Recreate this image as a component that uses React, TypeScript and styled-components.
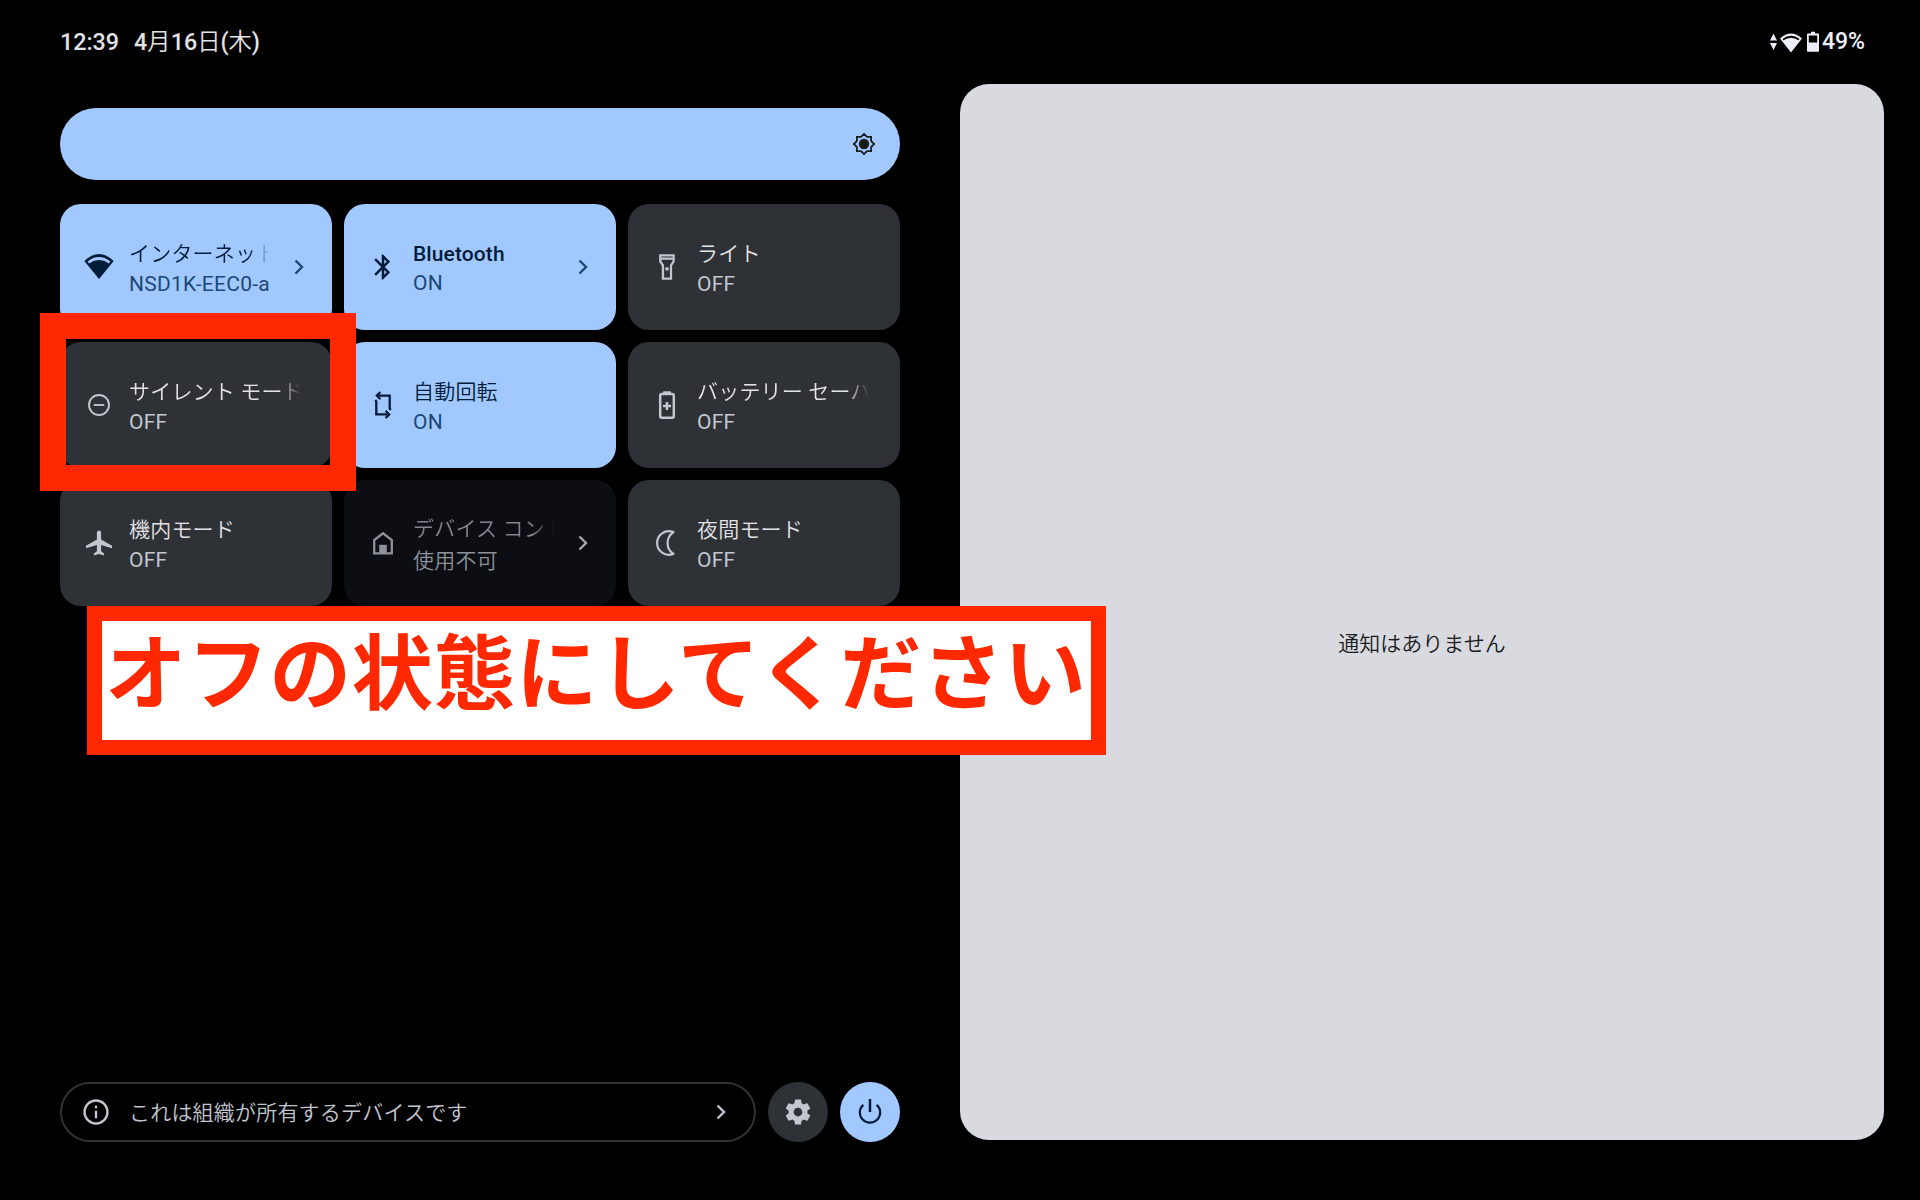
import React from "react";
import styled, { createGlobalStyle, css } from "styled-components";

const GlobalStyle = createGlobalStyle`
  * { box-sizing: border-box; }
  html, body { margin: 0; padding: 0; background: #000; }
  body { overflow: hidden; }
`;

type Tone = "on" | "off" | "unavailable";

const tones: Record<Tone, { bg: string; label: string; sub: string; icon: string; chevron: string }> = {
  on: { bg: "#a1c9ff", label: "#001c38", sub: "#1c4875", icon: "#001c38", chevron: "#1c4875" },
  off: { bg: "#2e3135", label: "#e3e2e6", sub: "#c3c6cf", icon: "#c3c6cf", chevron: "#c3c6cf" },
  unavailable: { bg: "#0c0e13", label: "#83868e", sub: "#8d9199", icon: "#8d9199", chevron: "#a4a8b0" },
};

const Screen = styled.div`
  position: relative;
  width: 1920px;
  height: 1200px;
  display: flex;
  flex-direction: column;
  background: #000;
  overflow: hidden;
  font-family: Roboto, "Noto Sans CJK JP", sans-serif;
`;

const StatusBar = styled.header`
  height: 84px;
  padding: 0 55px 0 60px;
  display: flex;
  justify-content: space-between;
  align-items: center;
  color: #e3e2e6;
  font-size: 23.3px;
  font-weight: 500;
  line-height: 28px;
  white-space: nowrap;
`;

const ClockGroup = styled.div`
  display: flex;
  align-items: baseline;
  gap: 15px;
`;

const Kanji = styled.span`
  font-weight: 350;
`;

const StatusIcons = styled.div`
  display: flex;
  align-items: center;
  color: #eeeef8;
  font-size: 23px;

  svg { display: block; flex: none; }
`;

const Percent = styled.span`
  margin-left: 3px;
`;

const Content = styled.main`
  display: flex;
  gap: 60px;
  padding-left: 60px;
  height: 1060px;
`;

const QuickSettings = styled.section`
  width: 840px;
  padding-top: 24px;
  display: flex;
  flex-direction: column;
  height: 1058px;
`;

const Brightness = styled.div`
  height: 72px;
  border-radius: 36px;
  background: #a1c9ff;
  display: flex;
  align-items: center;
  justify-content: flex-end;
  padding-right: 24px;
  color: #1a1c1e;
`;

const TileGrid = styled.div`
  margin-top: 24px;
  display: grid;
  grid-template-columns: repeat(3, 272px);
  grid-auto-rows: 126px;
  gap: 12px;
`;

const TileBox = styled.div<{ $tone: Tone; $chevron: boolean }>`
  display: flex;
  align-items: center;
  padding: 0 ${(p) => (p.$chevron ? 18 : 31)}px 0 24px;
  border-radius: 21px;
  background: ${(p) => tones[p.$tone].bg};
`;

const TileIcon = styled.span<{ $tone: Tone }>`
  width: 30px;
  height: 30px;
  flex: none;
  color: ${(p) => tones[p.$tone].icon};
  svg { display: block; }
`;

const TileText = styled.div`
  flex: 1;
  min-width: 0;
  margin-left: 15px;
  padding-top: 3px;
  font-size: 21px;
  white-space: nowrap;
`;

const TileLabel = styled.div<{ $tone: Tone; $latin?: boolean; $fade?: boolean }>`
  overflow: hidden;
  color: ${(p) => tones[p.$tone].label};
  font-weight: ${(p) => (p.$latin ? 500 : 350)};
  line-height: ${(p) => (p.$latin ? 25 : 28)}px;
  letter-spacing: ${(p) => (p.$latin ? 0.1 : 0.2)}px;
  ${(p) =>
    p.$fade &&
    css`
      mask-image: linear-gradient(to right, #000 calc(100% - 22px), transparent);
    `}
`;

const TileSub = styled.div<{ $tone: Tone; $cjk?: boolean }>`
  overflow: hidden;
  margin-top: 4px;
  color: ${(p) => tones[p.$tone].sub};
  font-weight: ${(p) => (p.$cjk ? 350 : 400)};
  line-height: ${(p) => (p.$cjk ? 28 : 25)}px;
  letter-spacing: 0.25px;
`;

const TileChevron = styled.span<{ $tone: Tone }>`
  width: 30px;
  height: 30px;
  flex: none;
  margin-left: 14px;
  color: ${(p) => tones[p.$tone].chevron};
  svg { display: block; }
`;

const Footer = styled.footer`
  margin-top: auto;
  display: flex;
  gap: 12px;
  height: 60px;
`;

const DevicePill = styled.div`
  flex: 1;
  display: flex;
  align-items: center;
  border: 2px solid #2e3135;
  border-radius: 30px;
  padding: 0 18px 0 19px;
  color: #c3c6cf;
  font-size: 21px;
  font-weight: 350;
  line-height: 30px;
  letter-spacing: 0.2px;
  white-space: nowrap;
  svg { display: block; flex: none; }
`;

const PillText = styled.span`
  flex: 1;
  margin-left: 18px;
  padding-top: 2px;
`;

const RoundButton = styled.div<{ $accent?: boolean }>`
  width: 60px;
  height: 60px;
  border-radius: 50%;
  display: flex;
  align-items: center;
  justify-content: center;
  background: ${(p) => (p.$accent ? "#a1c9ff" : "#2e3135")};
  color: ${(p) => (p.$accent ? "#001c38" : "#c3c6cf")};
  svg { display: block; }
`;

const NotificationPanel = styled.aside`
  width: 924px;
  height: 1056px;
  border-radius: 29px;
  background: #d9dadf;
  display: flex;
  align-items: center;
  justify-content: center;
  padding-top: 63px;
`;

const EmptyText = styled.p`
  margin: 0;
  color: #1a1c1e;
  font-size: 21px;
  font-weight: 350;
  line-height: 30px;
`;

const HighlightFrame = styled.div`
  position: absolute;
  left: 40px;
  top: 313px;
  width: 316px;
  height: 178px;
  border: 26px solid #ff2800;
`;

const Callout = styled.div`
  position: absolute;
  left: 87px;
  top: 606px;
  width: 1019px;
  height: 149px;
  border: 15px solid #ff2800;
  background: #fff;
  color: #ff2800;
  font-family: "Noto Sans CJK JP", sans-serif;
  font-size: 81.5px;
  font-weight: 700;
  letter-spacing: 0.7px;
  line-height: 92px;
  padding-left: 3px;
  white-space: nowrap;
`;

const WifiIcon = () => (
  <svg width="30" height="30" viewBox="0 0 30 30">
    <path
      fill="currentColor"
      fillRule="evenodd"
      d="M.3 9Q15-5 29.700 9L15 27ZM3.600 9.400L5 11.400Q15 4.600 25 11.400L26.400 9.400Q15 .8 3.600 9.400Z"
    />
  </svg>
);

const BluetoothIcon = () => (
  <svg width="30" height="30" viewBox="0 0 24 24" fill="currentColor">
    <path d="M17.71 7.71 12 2h-1v7.59L6.41 5 5 6.41 10.59 12 5 17.59 6.41 19 11 14.41V22h1l5.71-5.71-4.3-4.29 4.3-4.29zM13 5.83l1.88 1.88L13 9.59V5.83zm1.88 10.46L13 18.17v-3.76l1.88 1.88z" />
  </svg>
);

const FlashlightIcon = () => (
  <svg width="30" height="30" viewBox="0 0 24 24" fill="currentColor">
    <path
      fillRule="evenodd"
      d="M18.200 1.700H5.700v6.100l2.100 3.200v11.200h8.300V11l2.100-3.200V1.700zM16.500 3.500v.8h-9v-.8h9zM14.300 10.400v10H9.700v-10L7.600 7.300v-1.100h8.800v1.100l-2.100 3.100z"
    />
    <circle cx="12" cy="13.400" r="1.500" />
  </svg>
);

const DndIcon = () => (
  <svg width="30" height="30" viewBox="0 0 30 30" fill="none" stroke="currentColor" strokeWidth="1.900">
    <circle cx="15" cy="15" r="10" />
    <path d="M9.700 15h10.600" />
  </svg>
);

const RotateIcon = () => (
  <svg width="30" height="30" viewBox="0 0 30 30" fill="none" stroke="currentColor" strokeWidth="2.300">
    <path d="M10.500 5.600H21.700V18.600L22.800 20" />
    <path d="M19.500 24.400H8.300V11.400L7.200 10" />
    <path d="M12.400 2 8.800 5.600l3.600 3.600" />
    <path d="M17.600 20.800l3.600 3.600-3.600 3.600" />
  </svg>
);

const BatterySaverIcon = () => (
  <svg width="30" height="30" viewBox="0 0 30 30" fill="none" stroke="currentColor">
    <path d="M11 3.500V2q0-.8.800-.8h6.400q.8 0 .8.800v1.500z" fill="currentColor" stroke="none" />
    <rect x="8.200" y="3.900" width="13.600" height="23.800" rx="1.600" strokeWidth="2.500" />
    <path d="M15 12v8M11 16h8" strokeWidth="2.500" />
  </svg>
);

const AirplaneIcon = () => (
  <svg width="30" height="30" viewBox="0 0 30 30" fill="currentColor">
    <path d="M15 2.600c1.300 0 2.100 1 2.100 2.300V11.600L28 17.800v2.500L17.100 17v6.300l3 2.200v2L15 26l-5.100 1.500v-2l3-2.200V17L2 20.300v-2.500l10.900-6.200V4.900C12.900 3.600 13.700 2.600 15 2.600z" />
  </svg>
);

const HomeControlIcon = () => (
  <svg width="30" height="30" viewBox="0 0 30 30">
    <path d="M6.200 25.400V12L15 5.300l8.800 6.700v13.400z" fill="none" stroke="currentColor" strokeWidth="2.300" />
    <rect x="11.200" y="16.800" width="7.600" height="9" fill="currentColor" />
  </svg>
);

const MoonIcon = () => (
  <svg width="30" height="30" viewBox="0 0 30 30" fill="none" stroke="currentColor" strokeWidth="2.200" strokeLinejoin="round">
    <path d="M21.500 4.100C13 .8 5.100 7 5.100 15S13 29.200 21.500 25.900C13.600 20.800 13.600 9.200 21.500 4.100z" />
  </svg>
);

const ChevronIcon = () => (
  <svg width="30" height="30" viewBox="0 0 30 30" fill="none" stroke="currentColor" strokeWidth="2.400">
    <path d="M11.500 8.500l6.500 6.500-6.500 6.500" />
  </svg>
);

const SunIcon = () => (
  <svg width="24" height="24" viewBox="0 0 24 24">
    <path
      d="M12 1.900l3 3h4.100V9l3 3-3 3v4.100H15l-3 3-3-3H4.900V15l-3-3 3-3V4.900H9z"
      fill="none"
      stroke="currentColor"
      strokeWidth="1.800"
    />
    <circle cx="12" cy="12" r="5.200" fill="currentColor" />
  </svg>
);

const InfoIcon = () => (
  <svg width="30" height="30" viewBox="0 0 30 30">
    <circle cx="15" cy="15" r="11.500" fill="none" stroke="currentColor" strokeWidth="2.300" />
    <path d="M13.800 13.700h2.400v7.500h-2.400zM13.800 8.800h2.400v2.500h-2.400z" fill="currentColor" />
  </svg>
);

const GearIcon = () => (
  <svg width="30" height="30" viewBox="0 0 24 24" fill="currentColor">
    <path d="M19.500 12c0-.34-.03-.66-.07-.98l2.110-1.650c.19-.15.24-.42.12-.64l-2-3.460c-.12-.22-.39-.3-.61-.22l-2.490 1c-.52-.4-1.080-.73-1.690-.98l-.38-2.650C14.460 2.180 14.250 2 14 2h-4c-.25 0-.46.18-.49.42l-.38 2.650c-.61.25-1.170.59-1.690.98l-2.490-1c-.23-.09-.49 0-.61.22l-2 3.460c-.13.22-.07.49.12.64l2.110 1.650c-.04.32-.07.65-.07.98s.03.66.07.98l-2.110 1.650c-.19.15-.24.42-.12.64l2 3.460c.12.22.39.3.61.22l2.490-1c.52.4 1.080.73 1.690.98l.38 2.650c.03.24.24.42.49.42h4c.25 0 .46-.18.49-.42l.38-2.650c.61-.25 1.170-.59 1.690-.98l2.490 1c.23.09.49 0 .61-.22l2-3.460c.12-.22.07-.49-.12-.64l-2.110-1.650c.04-.32.07-.64.07-.98zM12 15.500c-1.930 0-3.500-1.570-3.500-3.500s1.570-3.500 3.500-3.500 3.500 1.570 3.500 3.500-1.570 3.500-3.500 3.500z" />
  </svg>
);

const PowerIcon = () => (
  <svg width="30" height="30" viewBox="0 0 30 30" fill="none" stroke="currentColor" strokeWidth="2.200">
    <path d="M15 2v13" strokeWidth="2.500" />
    <path d="M8.300 7.800a10.200 10.200 0 1 0 13.400 0" />
  </svg>
);

const SignalArrows = () => (
  <svg width="7" height="22" viewBox="0 0 7 22" fill="currentColor">
    <path d="M3.500 2.500 7 9.500H0zM0 12h7l-3.500 7z" />
  </svg>
);

const WifiStatusSvg = styled.svg`
  margin-left: 3px;
`;

const StatusWifi = () => (
  <WifiStatusSvg width="22" height="22" viewBox="0 0 22 22">
    <path
      fill="currentColor"
      fillRule="evenodd"
      d="M0 7.500Q11-2.300 22 7.500L11 21.500ZM2.500 7.900L3.500 9.300Q11 4 18.500 9.300L19.500 7.900Q11 1.400 2.500 7.900Z"
    />
  </WifiStatusSvg>
);

const BatteryStatusSvg = styled.svg`
  margin-left: 5px;
`;

const StatusBattery = () => (
  <BatteryStatusSvg width="12" height="22" viewBox="0 0 12 22">
    <path
      fill="currentColor"
      fillRule="evenodd"
      d="M4 .8h4v1.700h3.200q.8 0 .8.800v16.700q0 .8-.8.800H.8q-.8 0-.8-.8V3.300Q0 2.500.8 2.500H4zM1.800 4.600v6.800h8.400V4.600z"
    />
  </BatteryStatusSvg>
);

interface TileData {
  label: string;
  sub: string;
  tone: Tone;
  icon: React.ReactNode;
  chevron?: boolean;
  latin?: boolean;
  fade?: boolean;
  cjkSub?: boolean;
}

const tiles: TileData[] = [
  { label: "インターネット", sub: "NSD1K-EEC0-a", tone: "on", icon: <WifiIcon />, chevron: true, fade: true },
  { label: "Bluetooth", sub: "ON", tone: "on", icon: <BluetoothIcon />, chevron: true, latin: true },
  { label: "ライト", sub: "OFF", tone: "off", icon: <FlashlightIcon /> },
  { label: "サイレント モード", sub: "OFF", tone: "off", icon: <DndIcon />, fade: true },
  { label: "自動回転", sub: "ON", tone: "on", icon: <RotateIcon /> },
  { label: "バッテリー セーバー", sub: "OFF", tone: "off", icon: <BatterySaverIcon />, fade: true },
  { label: "機内モード", sub: "OFF", tone: "off", icon: <AirplaneIcon /> },
  { label: "デバイス コントロール", sub: "使用不可", tone: "unavailable", icon: <HomeControlIcon />, chevron: true, fade: true, cjkSub: true },
  { label: "夜間モード", sub: "OFF", tone: "off", icon: <MoonIcon /> },
];

const Tile = ({ label, sub, tone, icon, chevron, latin, fade, cjkSub }: TileData) => (
  <TileBox $tone={tone} $chevron={!!chevron}>
    <TileIcon $tone={tone}>{icon}</TileIcon>
    <TileText>
      <TileLabel $tone={tone} $latin={latin} $fade={fade}>{label}</TileLabel>
      <TileSub $tone={tone} $cjk={cjkSub}>{sub}</TileSub>
    </TileText>
    {chevron && <TileChevron $tone={tone}><ChevronIcon /></TileChevron>}
  </TileBox>
);

export default function App() {
  return (
    <Screen lang="ja">
      <GlobalStyle />
      <StatusBar>
        <ClockGroup>
          <span>12:39</span>
          <span>4<Kanji>月</Kanji>16<Kanji>日</Kanji>(<Kanji>木</Kanji>)</span>
        </ClockGroup>
        <StatusIcons>
          <SignalArrows />
          <StatusWifi />
          <StatusBattery />
          <Percent>49%</Percent>
        </StatusIcons>
      </StatusBar>
      <Content>
        <QuickSettings>
          <Brightness><SunIcon /></Brightness>
          <TileGrid>
            {tiles.map((t) => <Tile key={t.label} {...t} />)}
          </TileGrid>
          <Footer>
            <DevicePill>
              <InfoIcon />
              <PillText>これは組織が所有するデバイスです</PillText>
              <ChevronIcon />
            </DevicePill>
            <RoundButton><GearIcon /></RoundButton>
            <RoundButton $accent><PowerIcon /></RoundButton>
          </Footer>
        </QuickSettings>
        <NotificationPanel>
          <EmptyText>通知はありません</EmptyText>
        </NotificationPanel>
      </Content>
      <HighlightFrame />
      <Callout>オフの状態にしてください</Callout>
    </Screen>
  );
}
